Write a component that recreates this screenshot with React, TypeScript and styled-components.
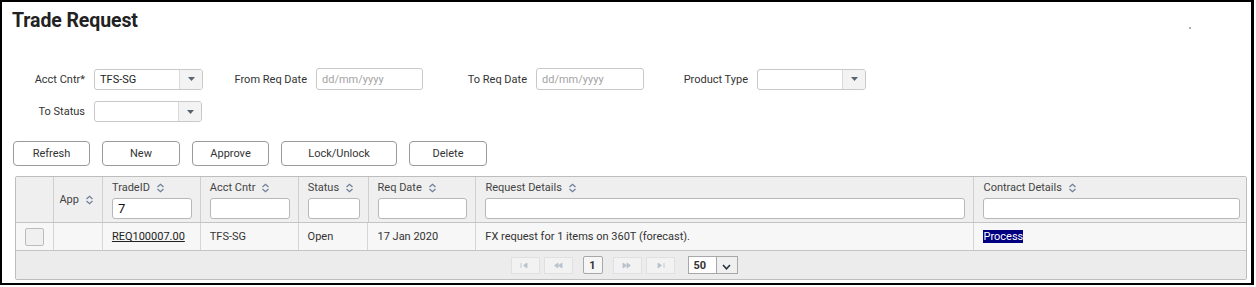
import React from 'react'
import styled, { createGlobalStyle } from 'styled-components'

const GlobalStyle = createGlobalStyle`
    html, body {
        margin: 0;
        padding: 0;
        background: #fff;
    }
    body {
        font-family: Roboto, "Liberation Sans", Arial, sans-serif;
        color: #333;
    }
`

const columns = [
    { key: 'chk', title: '', width: 38, sortable: false, filter: false },
    { key: 'app', title: 'App', width: 49, sortable: true, filter: false },
    { key: 'id', title: 'TradeID', width: 98, sortable: true, filter: true, value: '7' },
    { key: 'acct', title: 'Acct Cntr', width: 98, sortable: true, filter: true },
    { key: 'status', title: 'Status', width: 70, sortable: true, filter: true },
    { key: 'date', title: 'Req Date', width: 108, sortable: true, filter: true },
    { key: 'details', title: 'Request Details', width: 499, sortable: true, filter: true },
    { key: 'contract', title: 'Contract Details', width: 272, sortable: true, filter: true },
]

const SortIcon = () => (
    <svg width="9" height="10" viewBox="0 0 9 10" fill="none" stroke="#6d7f99" strokeWidth="1.2">
        <path d="M1.5 4 L4.5 1.2 L7.5 4" />
        <path d="M1.5 6 L4.5 8.8 L7.5 6" />
    </svg>
)

const Caret = () => (
    <svg width="7" height="4" viewBox="0 0 7 4">
        <path d="M0 0 H7 L3.5 4 Z" fill="#5a6470" />
    </svg>
)

// pager glyphs: tiny bars and triangles, greyed out
const PagerIcon = ({ kind }: { kind: 'first' | 'prev' | 'next' | 'last' }) => {
    const paths = {
        first: ['M2 2 V7', 'M8 2 L4.5 4.5 L8 7 Z'],
        prev: ['M6 2 L2.5 4.5 L6 7 Z', 'M10 2 L6.5 4.5 L10 7 Z'],
        next: ['M2 2 L5.5 4.5 L2 7 Z', 'M6 2 L9.5 4.5 L6 7 Z'],
        last: ['M4 2 L7.5 4.5 L4 7 Z', 'M10 2 V7'],
    }[kind]
    return (
        <svg width="12" height="9" viewBox="0 0 12 9" fill="#b8c2cd" stroke="#b8c2cd" strokeWidth="0.8">
            {paths.map(d => <path key={d} d={d} />)}
        </svg>
    )
}

const Select = ({ value = '', width }: { value?: string; width: number }) => (
    <SelectBox $width={width}>
        <SelectValue>{value}</SelectValue>
        <SelectArrow><Caret /></SelectArrow>
    </SelectBox>
)

const App = () => {
    return (
        <>
            <GlobalStyle />
            <Frame>
                <TitleRow>
                    <Title>Trade Request</Title>
                    <Dot />
                </TitleRow>

                <Filters>
                    <FilterRow>
                        <Field>
                            <Label $width={78}>Acct Cntr*</Label>
                            <Select value="TFS-SG" width={109} />
                        </Field>
                        <Field>
                            <Label $width={113}>From Req Date</Label>
                            <DateInput $width={107} placeholder="dd/mm/yyyy" />
                        </Field>
                        <Field>
                            <Label $width={113}>To Req Date</Label>
                            <DateInput $width={108} placeholder="dd/mm/yyyy" />
                        </Field>
                        <Field>
                            <Label $width={113}>Product Type</Label>
                            <Select width={109} />
                        </Field>
                    </FilterRow>
                    <FilterRow>
                        <Field>
                            <Label $width={78}>To Status</Label>
                            <Select width={108} />
                        </Field>
                    </FilterRow>
                </Filters>

                <Toolbar>
                    <Button $width={77}>Refresh</Button>
                    <Button $width={78}>New</Button>
                    <Button $width={77}>Approve</Button>
                    <Button $width={116}>Lock/Unlock</Button>
                    <Button $width={78}>Delete</Button>
                </Toolbar>

                <Grid>
                    <HeadRow>
                        {columns.map(c => (
                            <HeadCell key={c.key} $width={c.width} $center={!c.filter}>
                                {c.title && (
                                    <HeadTitle>
                                        {c.title}
                                        {c.sortable && <SortIcon />}
                                    </HeadTitle>
                                )}
                                {c.filter && <FilterInput defaultValue={c.value} />}
                            </HeadCell>
                        ))}
                    </HeadRow>
                    <DataRow>
                        <Cell $width={38}><Check /></Cell>
                        <Cell $width={49} />
                        <Cell $width={98}><IdLink>REQ100007.00</IdLink></Cell>
                        <Cell $width={98}>TFS-SG</Cell>
                        <Cell $width={70}>Open</Cell>
                        <Cell $width={108}>17 Jan 2020</Cell>
                        <Cell $width={499}>FX request for 1 items on 360T (forecast).</Cell>
                        <Cell $width={272}><Highlight>Process</Highlight></Cell>
                    </DataRow>
                    <Pager>
                        <PageBtn><PagerIcon kind="first" /></PageBtn>
                        <PageBtn><PagerIcon kind="prev" /></PageBtn>
                        <PageNum>1</PageNum>
                        <PageBtn><PagerIcon kind="next" /></PageBtn>
                        <PageBtn><PagerIcon kind="last" /></PageBtn>
                        <PageSize>
                            <span>50</span>
                            <PageSizeArrow>
                                <svg width="9" height="6" viewBox="0 0 9 6" fill="none" stroke="#2a3440" strokeWidth="1.6">
                                    <path d="M1 1 L4.5 4.8 L8 1" />
                                </svg>
                            </PageSizeArrow>
                        </PageSize>
                    </Pager>
                </Grid>
            </Frame>
        </>
    )
}

export default App

const Frame = styled.div`
    width: 1238px;
    height: 281px;
    border: 2px solid #000;
    border-right-width: 3px;
    background: #fff;
    padding: 0 0 0 11px;
    box-sizing: content-box;
`

const TitleRow = styled.div`
    display: flex;
    align-items: center;
    justify-content: space-between;
    padding-top: 6px;
    height: 25px;
    padding-right: 60px;
`

const Title = styled.h1`
    margin: 0 0 0 -1px;
    font-size: 19.5px;
    font-weight: 700;
    color: #222;
    letter-spacing: -0.1px;
`

const Dot = styled.span`
    width: 2px;
    height: 2px;
    background: #999;
    border-radius: 50%;
    margin-top: 14px;
`

const Filters = styled.div`
    display: flex;
    flex-direction: column;
    gap: 11px;
    margin-top: 35px;
    padding-left: 3px;
`

const FilterRow = styled.div`
    display: flex;
    align-items: center;
`

const Field = styled.div`
    display: flex;
    align-items: center;
`

const Label = styled.label<{ $width: number }>`
    width: ${p => p.$width}px;
    text-align: right;
    padding-right: 9px;
    box-sizing: border-box;
    font-size: 11px;
    color: #333;
    white-space: nowrap;
`

const SelectBox = styled.div<{ $width: number }>`
    width: ${p => p.$width}px;
    height: 21px;
    box-sizing: border-box;
    border: 1px solid #c9c9c9;
    border-radius: 3px;
    background: #fff;
    display: flex;
    align-items: stretch;
    overflow: hidden;
`

const SelectValue = styled.div`
    flex: 1;
    font-size: 11px;
    color: #222;
    padding-left: 5px;
    display: flex;
    align-items: center;
`

const SelectArrow = styled.div`
    width: 22px;
    background: #f3f3f3;
    border-left: 1px solid #dadada;
    display: flex;
    align-items: center;
    justify-content: center;
`

const DateInput = styled.input<{ $width: number }>`
    width: ${p => p.$width}px;
    height: 22px;
    box-sizing: border-box;
    border: 1px solid #c9c9c9;
    border-radius: 3px;
    font-family: inherit;
    font-size: 11px;
    padding: 0 5px;
    &::placeholder {
        color: #a4a4a4;
    }
`

const Toolbar = styled.div`
    display: flex;
    gap: 12px;
    margin-top: 19px;
`

const Button = styled.button<{ $width: number }>`
    width: ${p => p.$width}px;
    height: 25px;
    box-sizing: border-box;
    background: #fff;
    border: 1px solid #9a9a9a;
    border-radius: 4px;
    font-family: inherit;
    font-size: 11px;
    color: #333;
    cursor: pointer;
    padding: 0;
`

const Grid = styled.div`
    margin-top: 10px;
    margin-left: 2px;
    width: 1232px;
    border: 1px solid #bdbdbd;
    border-radius: 2px;
    box-sizing: border-box;
`

const HeadRow = styled.div`
    display: flex;
    height: 45px;
    background: #efefef;
    border-bottom: 1px solid #c4c4c4;
`

const HeadCell = styled.div<{ $width: number; $center?: boolean }>`
    width: ${p => p.$width}px;
    box-sizing: border-box;
    border-right: 1px solid #cfcfcf;
    padding: 4px 8px 0 9px;
    display: flex;
    flex-direction: column;
    justify-content: ${p => (p.$center ? 'center' : 'flex-start')};
    align-items: ${p => (p.$center ? 'flex-end' : 'stretch')};
    padding-bottom: ${p => (p.$center ? '4px' : '0')};
    &:last-child {
        border-right: none;
        padding-right: 6px;
    }
`

const HeadTitle = styled.div`
    display: flex;
    align-items: center;
    gap: 6px;
    font-size: 11px;
    color: #444;
    height: 13px;
`

const FilterInput = styled.input`
    margin-top: 4px;
    height: 21px;
    width: 100%;
    box-sizing: border-box;
    border: 1px solid #b8b8b8;
    border-radius: 3px;
    background: #fff;
    font-family: inherit;
    font-size: 13px;
    color: #111;
    padding: 0 5px;
`

const DataRow = styled.div`
    display: flex;
    height: 27px;
    background: #f7f7f7;
    border-bottom: 1px solid #c4c4c4;
`

const Cell = styled.div<{ $width: number }>`
    width: ${p => p.$width}px;
    box-sizing: border-box;
    border-right: 1px solid #d6d6d6;
    padding-left: 9px;
    display: flex;
    align-items: center;
    font-size: 11px;
    color: #333;
    white-space: nowrap;
    &:last-child {
        border-right: none;
    }
`

const Check = styled.span`
    width: 19px;
    height: 18px;
    box-sizing: border-box;
    border: 1px solid #bcbcbc;
    border-radius: 2px;
    background: #f0f0f0;
`

const IdLink = styled.span`
    text-decoration: underline;
    color: #222;
`

const Highlight = styled.span`
    background: #000080;
    color: #fff;
`

const Pager = styled.div`
    height: 28px;
    background: #ececec;
    display: flex;
    align-items: center;
    justify-content: center;
    gap: 4px;
    padding-right: 14px;
`

const PageBtn = styled.span`
    width: 29px;
    height: 17px;
    box-sizing: border-box;
    border: 1px solid #e0e0e0;
    background: #f2f2f2;
    display: flex;
    align-items: center;
    justify-content: center;
`

const PageNum = styled.span`
    width: 20px;
    height: 18px;
    box-sizing: border-box;
    border: 1px solid #a8a8a8;
    border-radius: 2px;
    background: #f6f6f6;
    font-size: 11px;
    font-weight: 700;
    color: #333;
    display: flex;
    align-items: center;
    justify-content: center;
    margin: 0 6px;
`

const PageSize = styled.div`
    margin-left: 9px;
    width: 50px;
    height: 18px;
    box-sizing: border-box;
    border: 1px solid #a8a8a8;
    background: #fff;
    display: flex;
    align-items: stretch;
    font-size: 11px;
    font-weight: 700;
    color: #333;
    span {
        flex: 1;
        padding-left: 5px;
        display: flex;
        align-items: center;
    }
`

const PageSizeArrow = styled.div`
    width: 20px;
    border-left: 1px solid #a8a8a8;
    background: #f0f0f0;
    display: flex;
    align-items: flex-end;
    justify-content: center;
    padding-bottom: 3px;
`
